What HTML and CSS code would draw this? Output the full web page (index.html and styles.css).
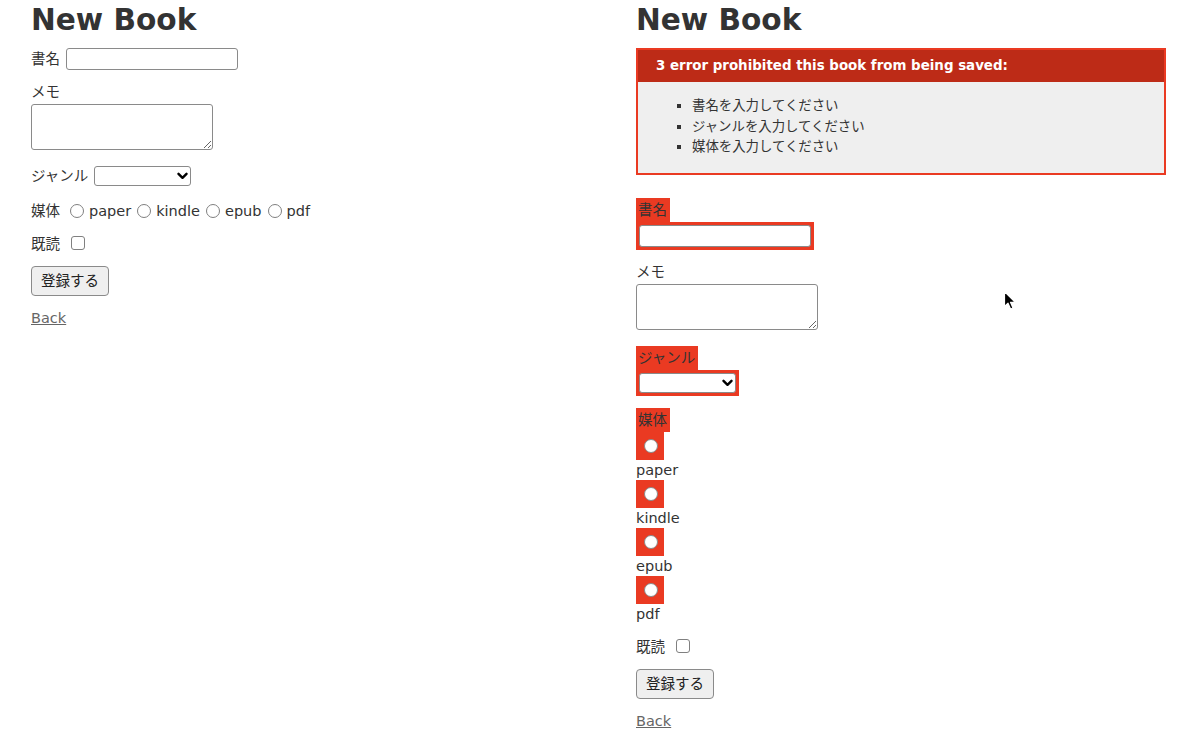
FILE: index.html
```html
<!DOCTYPE html>
<html lang="ja">
<head>
<meta charset="utf-8">
<title>New Book</title>
<link rel="stylesheet" href="styles.css">
</head>
<body>
<div class="page">
  <section class="pane">
    <h1 class="title">New Book</h1>
    <form class="book-form">
      <div class="field row">
        <label class="lbl">書名</label>
        <input class="text-input" type="text">
      </div>
      <div class="field memo-field">
        <label class="lbl block">メモ</label>
        <textarea class="memo"></textarea>
      </div>
      <div class="field row">
        <label class="lbl">ジャンル</label>
        <span class="select-wrap">
          <select class="genre"><option></option></select>
          <svg class="chev" width="11" height="8" viewBox="0 0 11 8"><path d="M1.5 1.8 L5.5 5.8 L9.5 1.8" fill="none" stroke="#000" stroke-width="2.4" stroke-linecap="round" stroke-linejoin="round"/></svg>
        </span>
      </div>
      <div class="field row radios">
        <label class="lbl">媒体</label>
        <span class="opt first"><input class="radio" type="radio" name="m1"><label>paper</label></span>
        <span class="opt"><input class="radio" type="radio" name="m1"><label>kindle</label></span>
        <span class="opt"><input class="radio" type="radio" name="m1"><label>epub</label></span>
        <span class="opt"><input class="radio" type="radio" name="m1"><label>pdf</label></span>
      </div>
      <div class="field row check-row">
        <label class="lbl">既読</label>
        <input class="check" type="checkbox">
      </div>
      <div class="field actions">
        <button class="submit" type="button">登録する</button>
      </div>
    </form>
    <a class="back" href="#">Back</a>
  </section>

  <section class="pane">
    <h1 class="title">New Book</h1>
    <div class="error-box">
      <h2 class="error-head">3 error prohibited this book from being saved:</h2>
      <ul class="error-list">
        <li>書名を入力してください</li>
        <li>ジャンルを入力してください</li>
        <li>媒体を入力してください</li>
      </ul>
    </div>
    <form class="book-form err-form">
      <div class="field">
        <div class="fwe fwe-label"><label class="lbl">書名</label></div>
        <div class="fwe fwe-input"><input class="text-input" type="text"></div>
      </div>
      <div class="field memo-field">
        <label class="lbl block">メモ</label>
        <textarea class="memo"></textarea>
      </div>
      <div class="field">
        <div class="fwe fwe-label"><label class="lbl">ジャンル</label></div>
        <div class="fwe fwe-input">
          <span class="select-wrap">
            <select class="genre"><option></option></select>
            <svg class="chev" width="11" height="8" viewBox="0 0 11 8"><path d="M1.5 1.8 L5.5 5.8 L9.5 1.8" fill="none" stroke="#000" stroke-width="2.4" stroke-linecap="round" stroke-linejoin="round"/></svg>
          </span>
        </div>
      </div>
      <div class="field">
        <div class="fwe fwe-label"><label class="lbl">媒体</label></div>
        <div class="fwe fwe-radio"><input class="radio" type="radio" name="m2"></div>
        <label class="opt-text">paper</label>
        <div class="fwe fwe-radio"><input class="radio" type="radio" name="m2"></div>
        <label class="opt-text">kindle</label>
        <div class="fwe fwe-radio"><input class="radio" type="radio" name="m2"></div>
        <label class="opt-text">epub</label>
        <div class="fwe fwe-radio"><input class="radio" type="radio" name="m2"></div>
        <label class="opt-text">pdf</label>
      </div>
      <div class="field row check-row">
        <label class="lbl">既読</label>
        <input class="check" type="checkbox">
      </div>
      <div class="field actions">
        <button class="submit" type="button">登録する</button>
      </div>
    </form>
    <a class="back" href="#">Back</a>
  </section>
</div>
<svg class="cursor" width="14" height="21" viewBox="0 0 14 21"><path d="M1.5 1.5 L1.5 16.5 L5 13.2 L7.6 19 L10 18 L7.5 12.3 L12.3 12.3 Z" fill="#000" stroke="#fff" stroke-width="1.2" stroke-linejoin="round"/></svg>
</body>
</html>
```

FILE: styles.css
```css
html, body {
  margin: 0;
  padding: 0;
  background: #fff;
}

body {
  color: #333;
  font-family: "DejaVu Sans", Verdana, "Noto Sans CJK JP", sans-serif;
  font-size: 14.5px;
  line-height: 20px;
}

.page {
  display: grid;
  grid-template-columns: 605px 595px;
}

.pane {
  padding: 2px 0 0 31px;
}

.title {
  margin: 0;
  font-size: 29.6px;
  line-height: 36px;
  font-weight: bold;
  color: #333;
}

.book-form {
  margin: 10px 0 0;
}

.field {
  margin-bottom: 12px;
}

.memo-field {
  padding-bottom: 4px;
}

.row {
  display: flex;
  align-items: center;
}

.lbl {
  color: #333;
}

.lbl.block {
  display: block;
  line-height: 21px;
}

.row .lbl + .text-input {
  margin-left: 6px;
}

.text-input {
  box-sizing: border-box;
  width: 172px;
  height: 22px;
  margin: 0;
  border: 1px solid #8a8a8a;
  border-radius: 3px;
  background: #fff;
  display: block;
}

.memo {
  display: block;
  box-sizing: border-box;
  width: 182px;
  height: 46px;
  margin: 1px 0 0;
  border: 1px solid #8a8a8a;
  border-radius: 3px;
  resize: both;
  font: inherit;
}

.select-wrap {
  position: relative;
  display: block;
}

.row .lbl + .select-wrap {
  margin-left: 6px;
}

.genre {
  display: block;
  box-sizing: border-box;
  width: 97px;
  height: 20px;
  margin: 0;
  border: 1px solid #8a8a8a;
  border-radius: 3px;
  background: #fff;
  -webkit-appearance: none;
  appearance: none;
}

.chev {
  position: absolute;
  right: 3px;
  top: 6px;
}

.radios {
  height: 23px;
  margin-top: 13px;
  margin-bottom: 11px;
}

.opt {
  display: flex;
  align-items: center;
  margin-left: 6px;
}

.opt.first {
  margin-left: 10px;
}

.radio {
  -webkit-appearance: none;
  appearance: none;
  box-sizing: border-box;
  width: 14px;
  height: 14px;
  margin: 0 5px 0 0;
  border: 1px solid #808080;
  border-radius: 50%;
  background: #fff;
}

.check-row {
  height: 22px;
  margin-bottom: 11px;
}

.check {
  -webkit-appearance: none;
  appearance: none;
  box-sizing: border-box;
  width: 14px;
  height: 14px;
  margin: -2px 0 0 11px;
  border: 1px solid #808080;
  border-radius: 3px;
  background: #fff;
}

.submit {
  box-sizing: border-box;
  height: 30px;
  padding: 0 9px;
  margin: 0;
  border: 1px solid #8a8a8a;
  border-radius: 4px;
  background: #efefef;
  color: #222;
  font-family: "DejaVu Sans", "Noto Sans CJK JP", sans-serif;
  font-size: 14.5px;
  line-height: 28px;
}

.actions {
  margin-bottom: 12px;
}

.back {
  display: inline-block;
  color: #666;
  text-decoration: underline;
  line-height: 20px;
}

/* error explanation */
.error-box {
  box-sizing: border-box;
  width: 530px;
  margin: 10px 0 23px;
  border: 2px solid #ea3a22;
  background: #efefef;
}

.error-head {
  margin: 0;
  height: 32px;
  padding: 0 0 0 18px;
  background: #bd2b17;
  color: #fff;
  font-size: 13.4px;
  line-height: 32px;
  font-weight: bold;
}

.error-list {
  margin: 14px 0 15px;
  padding: 0 0 0 54px;
  list-style: square;
  font-size: 13.4px;
  line-height: 20.5px;
  color: #333;
}

.err-form {
  margin-top: 0;
}

/* field_with_errors */
.fwe {
  background: #ea3a22;
  width: fit-content;
}

.fwe-label {
  padding: 2px 3px 2px 2px;
}

.fwe-input {
  padding: 3px;
}

.fwe-radio {
  display: flex;
  padding: 7px 6px 7px 8px;
}

.fwe-radio .radio {
  margin: 0;
  border-color: #8a8a8a;
}

.opt-text {
  display: block;
  line-height: 20px;
}

.cursor {
  position: absolute;
  left: 1003px;
  top: 290px;
}
```
